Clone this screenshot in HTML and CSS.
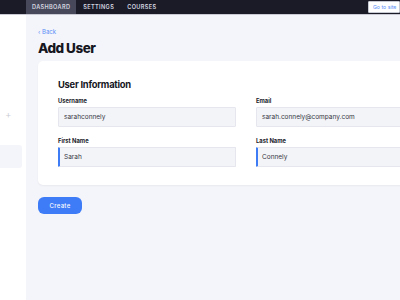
FILE: index.html
```html
<!DOCTYPE html>
<html>
<head>
<meta charset="utf-8">
<link rel="stylesheet" href="styles.css">
</head>
<body>
<div class="topbar">
  <div class="tab active">DASHBOARD</div>
  <div class="tab">SETTINGS</div>
  <div class="tab">COURSES</div>
  <div class="spacer"></div>
  <div class="gosite">Go to site</div>
</div>
<div class="layout">
  <aside class="sidebar">
    <div class="plus">+</div>
    <div class="side-item"></div>
  </aside>
  <main class="main">
    <div class="back">&lsaquo; Back</div>
    <h1 class="title">Add User</h1>
    <section class="card">
      <h2 class="card-title">User Information</h2>
      <div class="grid">
        <div class="field">
          <label class="label">Username</label>
          <div class="input">sarahconnely</div>
        </div>
        <div class="field">
          <label class="label">Email</label>
          <div class="input">sarah.connely@company.com</div>
        </div>
        <div class="field">
          <label class="label">First Name</label>
          <div class="input focus">Sarah</div>
        </div>
        <div class="field">
          <label class="label">Last Name</label>
          <div class="input focus">Connely</div>
        </div>
      </div>
    </section>
    <button class="create">Create</button>
  </main>
</div>
</body>
</html>
```

FILE: styles.css
```css
* { box-sizing: border-box; }
html, body { margin: 0; padding: 0; }
body {
  width: 400px;
  height: 300px;
  overflow: hidden;
  font-family: Inter, "Noto Sans", sans-serif;
  background: #f4f5fa;
  color: #15161e;
}
.topbar {
  height: 14px;
  background: #1a1b26;
  display: flex;
  align-items: stretch;
  padding-left: 26px;
  border-bottom: 1px solid #c9cad3;
  box-sizing: content-box;
}
.tab {
  display: flex;
  align-items: center;
  padding: 0 6px 0 7px;
  font-size: 5.6px;
  font-weight: 600;
  letter-spacing: 0.35px;
  color: #d6d7e0;
}
.tab.active {
  background: #474859;
  padding: 0 6px 0 6px;
}
.spacer { flex: 1; }
.gosite {
  margin: 1px 0;
  width: 32px;
  background: #fff;
  border: 1px solid #c7c9d3;
  border-radius: 1px;
  color: #5b8ff7;
  font-size: 5.2px;
  display: flex;
  align-items: center;
  padding-left: 4px;
  white-space: nowrap;
}
.layout {
  display: flex;
  height: 285px;
}
.sidebar {
  width: 26px;
  flex: none;
  background: #fff;
  padding-top: 93px;
}
.plus {
  color: #c9cad2;
  font-size: 10px;
  font-weight: 300;
  line-height: 12px;
  padding-left: 5px;
}
.side-item {
  margin-top: 25px;
  width: 22px;
  height: 23px;
  background: #f4f5fa;
  border-radius: 0 3px 3px 0;
}
.main {
  flex: 1;
  padding: 13px 0 0 12px;
  min-width: 0;
}
.back {
  color: #5b8ff7;
  font-size: 6px;
  line-height: 8px;
}
.title {
  margin: 3px 0 0 0;
  font-size: 13.5px;
  font-weight: 800;
  line-height: 18px;
  letter-spacing: -0.5px;
}
.card {
  margin-top: 4px;
  width: 420px;
  background: #fff;
  border-radius: 5px;
  padding: 17px 20px 18px 20px;
  box-shadow: 0 1px 2px rgba(20, 20, 40, 0.05);
}
.card-title {
  margin: 0;
  font-size: 9.4px;
  font-weight: 700;
  line-height: 13px;
  letter-spacing: -0.25px;
}
.grid {
  margin-top: 6px;
  display: grid;
  grid-template-columns: 178px 178px;
  column-gap: 20px;
  row-gap: 10px;
}
.label {
  display: block;
  font-size: 5.8px;
  font-weight: 700;
  line-height: 8px;
  color: #22232c;
}
.input {
  margin-top: 2px;
  height: 20px;
  background: #f3f4f8;
  border: 1px solid #e6e7ee;
  border-radius: 1px;
  font-size: 6.5px;
  color: #35363f;
  display: flex;
  align-items: center;
  padding-left: 5px;
}
.input.focus {
  border-left: 2px solid #3d7cf5;
  padding-left: 4px;
}
.create {
  margin-top: 12px;
  width: 44px;
  height: 17px;
  background: #3d7cf6;
  color: #fff;
  border: none;
  border-radius: 6px;
  font-family: Inter, "Noto Sans", sans-serif;
  font-size: 6px;
  font-weight: 500;
  letter-spacing: 0.3px;
  padding: 0;
}
```
